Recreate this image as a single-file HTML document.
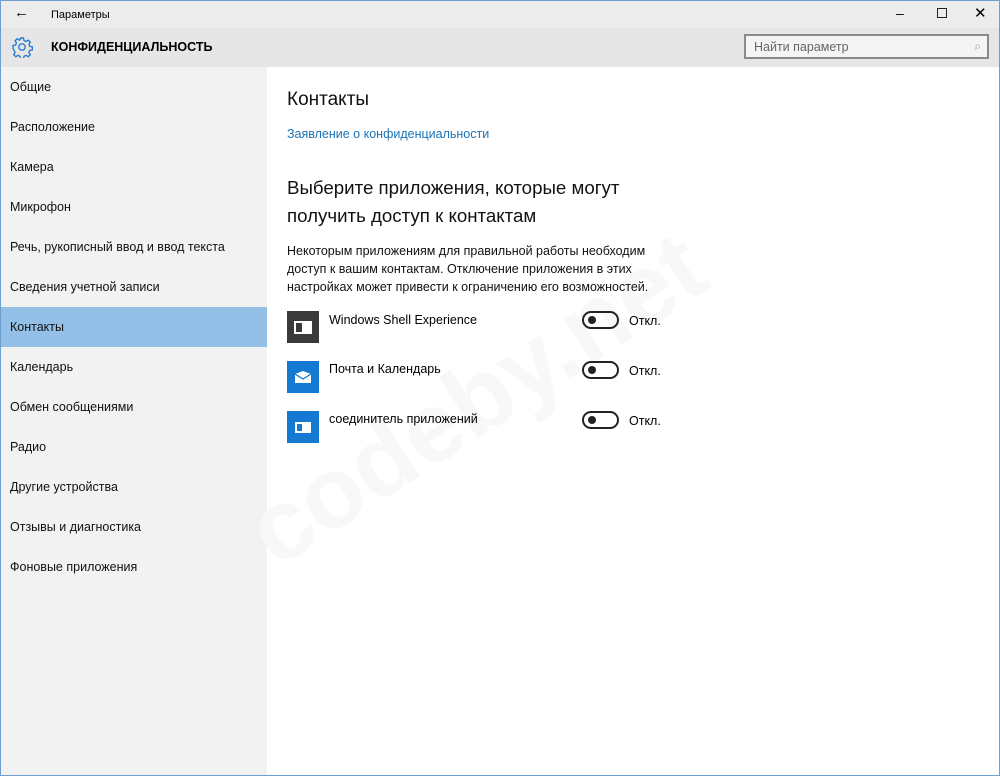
<!DOCTYPE html>
<html><head><meta charset="utf-8"><style>
*{margin:0;padding:0;box-sizing:border-box}
body{width:1000px;height:776px;overflow:hidden;font-family:"Liberation Sans","DejaVu Sans",sans-serif;background:#fff;position:relative;color:#000}
.win{position:absolute;inset:0;border:1px solid #6d9fd0;z-index:5;pointer-events:none}
.title{position:absolute;left:1px;top:1px;right:1px;height:27px;background:#ececec;font-size:11px}
.hdr{position:absolute;left:1px;top:28px;right:1px;height:39px;background:#e6e6e6}
.side{position:absolute;left:1px;top:67px;width:266px;bottom:1px;background:#f2f2f2}
.side div{height:40px;line-height:40px;padding-left:9px;font-size:12.5px;color:#111}
.side .sel{background:#94c0e8}
.abs{position:absolute}
.app{position:absolute;left:287px;width:32px;height:32px}
.name{position:absolute;left:329px;font-size:12.5px}
.tog{position:absolute;left:582px;width:37px;height:18px;border:2px solid #222;border-radius:9px}
.tog:after{content:"";position:absolute;left:4px;top:3px;width:8px;height:8px;border-radius:50%;background:#222}
.off{position:absolute;left:629px;font-size:12.5px}
</style></head><body>
<div class="win"></div>
<div class="title">
 <span class="abs" style="left:13px;top:3px;font-size:15px">←</span>
 <span class="abs" style="left:50px;top:8px">Параметры</span>
 <span class="abs" style="left:895px;top:4px;font-size:14px">–</span>
 <span class="abs" style="left:936px;top:7px;width:10px;height:10px;border:1px solid #222"></span>
 <span class="abs" style="left:973px;top:3px;font-size:15px">✕</span>
</div>
<div class="hdr">
 <svg class="abs" style="left:10px;top:8px" width="22" height="22" viewBox="0 0 22 22"><g fill="none" stroke="#2b7bd0" stroke-width="1.4"><circle cx="11" cy="11" r="3.2"/><path d="M9.5 2h3l.5 2.5 2 1 2.2-1.4 2.1 2.1-1.4 2.2 1 2 2.5.5v3l-2.5.5-1 2 1.4 2.2-2.1 2.1-2.2-1.4-2 1-.5 2.5h-3l-.5-2.5-2-1-2.2 1.4-2.1-2.1 1.4-2.2-1-2L2 12.5v-3l2.5-.5 1-2L4.1 4.8 6.2 2.7 8.4 4.1l1-.6z"/></g></svg>
 <span class="abs" style="left:50px;top:12px;font-size:12.5px;font-weight:bold">КОНФИДЕНЦИАЛЬНОСТЬ</span>
 <div class="abs" style="left:743px;top:6px;width:245px;height:25px;border:2px solid #8a8a8a;background:#f4f4f4;font-size:12.5px;color:#666;padding:4px 0 0 8px">Найти параметр<span class="abs" style="right:6px;top:3px;color:#999;font-size:12px">⌕</span></div>
</div>
<div class="side">
 <div>Общие</div><div>Расположение</div><div>Камера</div><div>Микрофон</div><div>Речь, рукописный ввод и ввод текста</div><div>Сведения учетной записи</div><div class="sel">Контакты</div><div>Календарь</div><div>Обмен сообщениями</div><div>Радио</div><div>Другие устройства</div><div>Отзывы и диагностика</div><div>Фоновые приложения</div>
</div>
<div class="abs" style="font-size:100px;font-weight:bold;color:#f8f8f8;transform:rotate(-33deg);transform-origin:center;width:600px;left:210px;top:320px">codeby.net</div>
<div class="abs" style="left:287px;top:89px;font-size:19px;color:#111">Контакты</div>
<div class="abs" style="left:287px;top:127px;font-size:12.5px;color:#1a73b8">Заявление о конфиденциальности</div>
<div class="abs" style="left:287px;top:174px;font-size:18.7px;line-height:28px;color:#111">Выберите приложения, которые могут<br>получить доступ к контактам</div>
<div class="abs" style="left:287px;top:242px;font-size:12.5px;line-height:18px;color:#111">Некоторым приложениям для правильной работы необходим<br>доступ к вашим контактам. Отключение приложения в этих<br>настройках может привести к ограничению его возможностей.</div>
<div class="app" style="top:311px;background:#3a3a3a"><div class="abs" style="left:7px;top:10px;width:18px;height:13px;border:2px solid #fff"></div><div class="abs" style="left:15px;top:12px;width:8px;height:9px;background:#fff"></div></div>
<div class="name" style="top:313px">Windows Shell Experience</div>
<div class="tog" style="top:311px"></div><div class="off" style="top:314px">Откл.</div>
<div class="app" style="top:361px;background:#1479d0"><svg class="abs" style="left:8px;top:10px" width="16" height="12" viewBox="0 0 16 12"><path d="M0 3L8 0l8 3v9H0z" fill="#fff"/><path d="M0 3l8 5 8-5" fill="none" stroke="#1479d0" stroke-width="1.3"/></svg></div>
<div class="name" style="top:362px">Почта и Календарь</div>
<div class="tog" style="top:361px"></div><div class="off" style="top:364px">Откл.</div>
<div class="app" style="top:411px;background:#1479d0"><div class="abs" style="left:8px;top:11px;width:16px;height:11px;border:2px solid #fff"></div><div class="abs" style="left:15px;top:13px;width:7px;height:7px;background:#fff"></div></div>
<div class="name" style="top:412px">соединитель приложений</div>
<div class="tog" style="top:411px"></div><div class="off" style="top:414px">Откл.</div>
</body></html>
